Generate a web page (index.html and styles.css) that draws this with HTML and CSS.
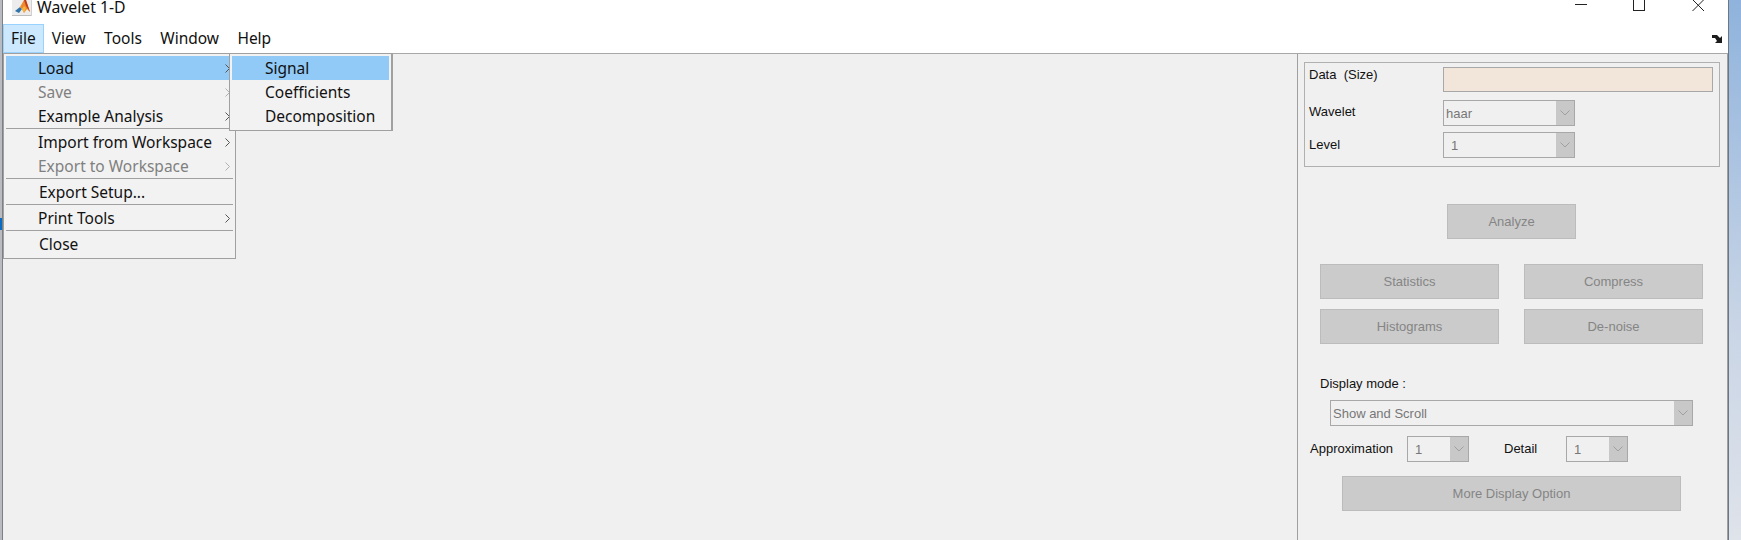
FILE: index.html
```html
<!DOCTYPE html>
<html lang="en">
<head>
    <meta charset="UTF-8">
    <title>Wavelet 1-D</title>
    <link rel="stylesheet" href="styles.css">
</head>
<body>
    <div class="desk-left">
        <div class="desk-mark"></div>
    </div>

    <div class="window">
        <div class="title-bar">
            <svg class="app-icon" width="20" height="16" viewBox="0 0 20 16">
                <rect x="0" y="0" width="20" height="15" fill="#ececec"/>
                <rect x="0" y="15" width="20" height="1" fill="#bdbdbd"/>
                <rect x="19" y="0" width="1" height="16" fill="#d0d0d0"/>
                <path d="M3 11 L8 7 L10 9 L7 13 Z" fill="#2f73a8"/>
                <path d="M8 7 L12 0 L14 0 L18 12 L15 9 L12 13 L10 9 Z" fill="#ee8a2c"/>
                <path d="M12 0 L14 0 L18 12 L14 6 Z" fill="#c23e1a"/>
                <path d="M10 9 L12 6 L14 8 L12 13 Z" fill="#f5b73c"/>
            </svg>
            <span class="title-text">Wavelet 1-D</span>
            <div class="win-btns">
                <div class="win-min"></div>
                <div class="win-max"></div>
                <svg class="win-close" width="12" height="12" viewBox="0 0 12 12">
                    <path d="M0.5 -0.5 L12 11 M12 -0.5 L0.5 11" stroke="#222" stroke-width="1" fill="none"/>
                </svg>
            </div>
        </div>

        <div class="menu-bar">
            <span class="menu-top active">File</span>
            <span class="menu-top">View</span>
            <span class="menu-top">Tools</span>
            <span class="menu-top">Window</span>
            <span class="menu-top">Help</span>
            <svg class="dock-icon" width="11" height="8" viewBox="0 0 11 8">
                <path d="M0 0 H5 L8 3 L10 1 V8 H3 L5 6 L3 3 H0 Z" fill="#1c1c1c"/>
            </svg>
        </div>

        <div class="content">
            <div class="plot-area"></div>

            <div class="side-panel">
                <div class="data-box">
                    <div class="box-row row-data">
                        <span class="box-label label-data">Data&nbsp; (Size)</span>
                        <div class="data-field"></div>
                    </div>
                    <div class="box-row row-wavelet">
                        <span class="box-label">Wavelet</span>
                        <div class="combo combo-small">
                            <span class="combo-text">haar</span>
                            <span class="combo-arrow"><svg width="10" height="6" viewBox="0 0 10 6"><path d="M0.5 0.5 L5 5 L9.5 0.5" stroke="#9f9f9f" fill="none"/></svg></span>
                        </div>
                    </div>
                    <div class="box-row row-level">
                        <span class="box-label">Level</span>
                        <div class="combo combo-small">
                            <span class="combo-text indent">1</span>
                            <span class="combo-arrow"><svg width="10" height="6" viewBox="0 0 10 6"><path d="M0.5 0.5 L5 5 L9.5 0.5" stroke="#9f9f9f" fill="none"/></svg></span>
                        </div>
                    </div>
                </div>

                <div class="btn btn-analyze">Analyze</div>

                <div class="btn-grid">
                    <div class="btn">Statistics</div>
                    <div class="btn">Compress</div>
                    <div class="btn">Histograms</div>
                    <div class="btn">De-noise</div>
                </div>

                <div class="mode-label">Display mode :</div>
                <div class="combo combo-wide">
                    <span class="combo-text">Show and Scroll</span>
                    <span class="combo-arrow"><svg width="10" height="6" viewBox="0 0 10 6"><path d="M0.5 0.5 L5 5 L9.5 0.5" stroke="#9f9f9f" fill="none"/></svg></span>
                </div>

                <div class="level-row">
                    <span class="level-label approx">Approximation</span>
                    <div class="combo combo-tiny">
                        <span class="combo-text indent">1</span>
                        <span class="combo-arrow"><svg width="10" height="6" viewBox="0 0 10 6"><path d="M0.5 0.5 L5 5 L9.5 0.5" stroke="#9f9f9f" fill="none"/></svg></span>
                    </div>
                    <span class="level-label detail">Detail</span>
                    <div class="combo combo-tiny">
                        <span class="combo-text indent">1</span>
                        <span class="combo-arrow"><svg width="10" height="6" viewBox="0 0 10 6"><path d="M0.5 0.5 L5 5 L9.5 0.5" stroke="#9f9f9f" fill="none"/></svg></span>
                    </div>
                </div>

                <div class="btn btn-more">More Display Option</div>
            </div>
        </div>

        <!-- open menus -->
        <div class="menu file-menu">
            <div class="item hilite"><span>Load</span><svg class="arrow" width="5" height="9" viewBox="0 0 5 9"><path d="M0.5 0.5 L4.5 4.5 L0.5 8.5" fill="none" stroke="#555"/></svg></div>
            <div class="item off"><span>Save</span><svg class="arrow" width="5" height="9" viewBox="0 0 5 9"><path d="M0.5 0.5 L4.5 4.5 L0.5 8.5" fill="none" stroke="#b0b0b0"/></svg></div>
            <div class="item"><span>Example Analysis</span><svg class="arrow" width="5" height="9" viewBox="0 0 5 9"><path d="M0.5 0.5 L4.5 4.5 L0.5 8.5" fill="none" stroke="#555"/></svg></div>
            <div class="sep"></div>
            <div class="item"><span>Import from Workspace</span><svg class="arrow" width="5" height="9" viewBox="0 0 5 9"><path d="M0.5 0.5 L4.5 4.5 L0.5 8.5" fill="none" stroke="#555"/></svg></div>
            <div class="item off"><span>Export to Workspace</span><svg class="arrow" width="5" height="9" viewBox="0 0 5 9"><path d="M0.5 0.5 L4.5 4.5 L0.5 8.5" fill="none" stroke="#b0b0b0"/></svg></div>
            <div class="sep"></div>
            <div class="item tall nudge"><span>Export Setup...</span></div>
            <div class="sep"></div>
            <div class="item tall"><span>Print Tools</span><svg class="arrow" width="5" height="9" viewBox="0 0 5 9"><path d="M0.5 0.5 L4.5 4.5 L0.5 8.5" fill="none" stroke="#555"/></svg></div>
            <div class="sep"></div>
            <div class="item tall nudge"><span>Close</span></div>
        </div>
        <div class="menu sub-menu">
            <div class="item hilite"><span>Signal</span></div>
            <div class="item"><span>Coefficients</span></div>
            <div class="item"><span>Decomposition</span></div>
        </div>
    </div>

    <div class="desk-right"></div>
</body>
</html>
```

FILE: styles.css
```css
* {
    box-sizing: border-box;
}

html, body {
    margin: 0;
    height: 540px;
    overflow: hidden;
}

body {
    display: flex;
    background: #fff;
    font-family: "Noto Sans", "Liberation Sans", sans-serif;
    color: #111;
}

.desk-left {
    width: 3px;
    height: 100%;
    background: #b8bcc2;
    border-right: 1px solid #808080;
    position: relative;
}

.desk-mark {
    position: absolute;
    top: 218px;
    left: 0;
    width: 2px;
    height: 12px;
    background: #0a6cc0;
}

.desk-right {
    width: 13px;
    height: 100%;
    border-left: 1px solid #6d7683;
    background: linear-gradient(#8fb3dc, #c9d5e6 60%, #dfe3ea);
}

.window {
    width: 1725px;
    height: 100%;
    display: flex;
    flex-direction: column;
    position: relative;
}

/* title bar */
.title-bar {
    height: 24px;
    background: #fff;
    display: flex;
    align-items: flex-start;
    padding-left: 9px;
}

.app-icon {
    flex: none;
}

.title-text {
    font-size: 15.8px;
    line-height: 14px;
    margin-left: 5px;
}

.win-btns {
    margin-left: auto;
    display: flex;
    align-items: flex-start;
    padding-right: 24px;
}

.win-min {
    width: 12px;
    height: 1px;
    margin-top: 4px;
    background: #222;
}

.win-max {
    width: 12px;
    height: 11px;
    margin-left: 46px;
    border: 1px solid #222;
    border-top: 0;
}

.win-close {
    margin-left: 47px;
}

/* menu bar */
.menu-bar {
    height: 30px;
    background: #fff;
    border-bottom: 1px solid #a8a8a8;
    display: flex;
    align-items: stretch;
    font-size: 15.5px;
    position: relative;
}

.menu-top {
    padding: 0 7px;
    margin-right: 2.4px;
    line-height: 27px;
    border: 1px solid transparent;
}

.menu-top.active {
    margin-right: 0;
    background: #cce8ff;
    border-color: #99d1ff;
}

.dock-icon {
    position: absolute;
    top: 11px;
    right: 5px;
}

/* main area */
.content {
    flex: 1;
    display: flex;
    background: #f0f0f0;
}

.plot-area {
    flex: 1;
}

.side-panel {
    width: 431px;
    border-left: 1px solid #a0a0a0;
    border-right: 1px solid #a0a0a0;
    padding: 8px 0 0 6px;
    font-family: "Liberation Sans", Arial, sans-serif;
    font-size: 13px;
}

.data-box {
    width: 416px;
    height: 105px;
    border: 1px solid #b0b0b0;
    padding: 4px 0 0 4px;
}

.box-row {
    display: flex;
    justify-content: flex-start;
}

.row-wavelet {
    margin-top: 8px;
    align-items: center;
}

.row-level {
    margin-top: 6px;
    align-items: center;
}

.box-label {
    width: 134px;
    flex: none;
}

.label-data {
    line-height: 16px;
}

.row-wavelet .box-label {
    margin-bottom: 4px;
}

.row-level .box-label {
    margin-bottom: 2px;
}

.data-field {
    width: 270px;
    height: 25px;
    background: #f2e6da;
    border: 1px solid #a8a8a8;
}

/* combo boxes */
.combo {
    height: 26px;
    border: 1px solid #a8a8a8;
    display: flex;
    align-items: center;
    justify-content: space-between;
    flex: none;
}

.combo-small {
    width: 132px;
}

.combo-wide {
    width: 363px;
    margin-left: 26px;
    margin-top: 8px;
}

.combo-tiny {
    width: 62px;
}

.combo-text {
    padding-left: 2px;
    color: #777;
}

.combo-text.indent {
    padding-left: 7px;
}

.combo-arrow {
    width: 18px;
    height: 100%;
    background: #c8c8c8;
    display: flex;
    align-items: center;
    justify-content: center;
}

/* buttons */
.btn {
    height: 35px;
    background: #cbcbcb;
    border: 1px solid #bcbcbc;
    color: #858585;
    display: flex;
    align-items: center;
    justify-content: center;
}

.btn-analyze {
    width: 129px;
    margin: 37px 0 0 143px;
}

.btn-grid {
    width: 383px;
    margin: 25px 0 0 16px;
    display: grid;
    grid-template-columns: 179px 179px;
    column-gap: 25px;
    row-gap: 10px;
}

.mode-label {
    margin: 32px 0 0 16px;
    line-height: 16px;
}

.level-row {
    display: flex;
    align-items: center;
    margin-top: 10px;
}

.level-label {
    margin-bottom: 2px;
}

.level-label.approx {
    margin-left: 6px;
    width: 97px;
}

.level-label.detail {
    margin-left: 35px;
    width: 62px;
}

.btn-more {
    width: 339px;
    margin: 14px 0 0 38px;
}

/* drop-down menus */
.menu {
    position: absolute;
    top: 53px;
    background: #f2f2f2;
    border: 1px solid #a0a0a0;
    padding: 2px 2px 0;
    font-size: 15.5px;
}

.file-menu {
    left: 0;
    width: 233px;
    height: 206px;
}

.sub-menu {
    left: 226px;
    width: 163px;
    height: 78px;
    box-shadow: 1px 0 0 #a0a0a0;
}

.item {
    height: 24px;
    line-height: 24px;
    padding-left: 32px;
    position: relative;
    color: #111;
}

.sub-menu .item {
    padding-left: 33px;
}

.item.off {
    color: #808080;
}

.item.hilite {
    background: #91c9f7;
}

.item.tall {
    line-height: 25px;
}

.item.nudge {
    padding-left: 33px;
}

.arrow {
    position: absolute;
    right: 3px;
    top: 8px;
}

.sep {
    height: 1px;
    background: #a0a0a0;
    margin: 0 0 1px 0;
}
```
